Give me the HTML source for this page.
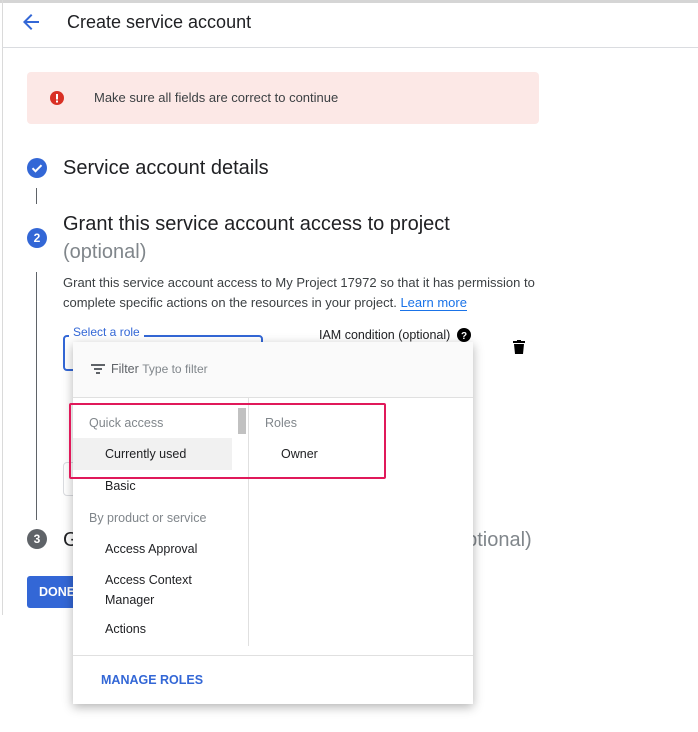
<!DOCTYPE html>
<html><head><meta charset="utf-8"><style>
*{margin:0;padding:0;box-sizing:border-box}
body{width:698px;height:732px;overflow:hidden;background:#fff;font-family:"Liberation Sans",Arial,sans-serif;color:#202124;position:relative}
.a{position:absolute;white-space:nowrap}
</style></head><body>
<div class="a" style="left:0;top:0;width:698px;height:3px;background:#d5d5d5"></div>
<div class="a" style="left:2px;top:0;width:1px;height:615px;background:#dadada"></div>
<div class="a" style="left:2px;top:47px;width:696px;height:1px;background:#dadce0"></div>
<svg class="a" style="left:19px;top:10px" width="24" height="24" viewBox="0 0 24 24"><path d="M20 11H7.83l5.59-5.59L12 4l-8 8 8 8 1.41-1.41L7.83 13H20v-2z" fill="#3367d6"/></svg>
<div class="a" style="left:67px;top:12px;font-size:18px">Create service account</div>
<div class="a" style="left:27px;top:72px;width:512px;height:52px;background:#fce8e6;border-radius:4px"></div>
<svg class="a" style="left:50px;top:91px" width="14" height="14" viewBox="0 0 14 14"><circle cx="7" cy="7" r="7" fill="#d93025"/><rect x="6" y="3" width="2" height="5.5" fill="#fff"/><rect x="6" y="9.5" width="2" height="2" fill="#fff"/></svg>
<div class="a" style="left:94px;top:90px;font-size:13px;color:#3c4043">Make sure all fields are correct to continue</div>
<svg class="a" style="left:27px;top:158px" width="20" height="20" viewBox="0 0 20 20"><circle cx="10" cy="10" r="10" fill="#3367d6"/><path d="M5.5 10.2l3 3 6-6" stroke="#fff" stroke-width="2" fill="none"/></svg>
<div class="a" style="left:63px;top:157px;font-size:20px">Service account details</div>
<div class="a" style="left:36px;top:188px;width:1px;height:16px;background:#5f6368"></div>
<div class="a" style="left:27px;top:228px;width:20px;height:20px;border-radius:50%;background:#3367d6;color:#fff;font-size:12px;font-weight:bold;text-align:center;line-height:20px">2</div>
<div class="a" style="left:63px;top:213px;font-size:20px">Grant this service account access to project</div>
<div class="a" style="left:63px;top:241px;font-size:20px;color:#80868b">(optional)</div>
<div class="a" style="left:36px;top:272px;width:1px;height:248px;background:#5f6368"></div>
<div class="a" style="left:63px;top:273px;font-size:13px;line-height:20px;color:#3c4043">Grant this service account access to My Project 17972 so that it has permission to<br>complete specific actions on the resources in your project. <span style="color:#1a73e8;border-bottom:1px solid #1a73e8">Learn more</span></div>
<div class="a" style="left:63px;top:335px;width:200px;height:36px;border:2px solid #3367d6;border-radius:4px"></div>
<div class="a" style="left:69px;top:325px;background:#fff;padding:0 4px;font-size:12px;color:#3367d6">Select a role</div>
<div class="a" style="left:319px;top:328px;font-size:12.5px">IAM condition (optional)</div>
<svg class="a" style="left:457px;top:328px" width="14" height="14" viewBox="0 0 14 14"><circle cx="7" cy="7" r="7" fill="#000"/><text x="7" y="11" font-size="10" font-weight="bold" fill="#fff" text-anchor="middle" font-family="Liberation Sans">?</text></svg>
<svg class="a" style="left:513px;top:340px" width="12" height="14" viewBox="0 0 12 14"><rect x="0" y="1" width="12" height="2" fill="#000"/><rect x="4" y="0" width="4" height="2" fill="#000"/><path d="M1 4h10l-1 10H2z" fill="#000"/></svg>
<div class="a" style="left:63px;top:462px;width:20px;height:34px;border:1px solid #dadce0;border-radius:4px"></div>
<div class="a" style="left:27px;top:529px;width:20px;height:20px;border-radius:50%;background:#5f6368;color:#fff;font-size:12px;font-weight:bold;text-align:center;line-height:20px">3</div>
<div class="a" style="left:63px;top:529px;font-size:20px">G</div>
<div class="a" style="left:455px;top:529px;font-size:20px;color:#80868b">optional)</div>
<div class="a" style="left:27px;top:576px;width:60px;height:32px;background:#3367d6;border-radius:3px;color:#fff;font-size:12.5px;font-weight:bold;padding:9px 0 0 12px">DONE</div>
<div class="a" style="left:73px;top:342px;width:400px;height:362px;background:#fff;box-shadow:0 3px 10px rgba(0,0,0,.3)">
 <div class="a" style="left:0;top:0;width:400px;height:56px;background:#fafafa;border-bottom:1px solid #e0e0e0"></div>
 <svg class="a" style="left:18px;top:21px" width="14" height="12" viewBox="0 0 14 12"><rect x="0" y="1" width="14" height="2" fill="#5f6368"/><rect x="3" y="5" width="8" height="2" fill="#5f6368"/><rect x="5" y="9" width="4" height="2" fill="#5f6368"/></svg>
 <div class="a" style="left:38px;top:20px;font-size:12.5px;color:#5f6368">Filter <span style="color:#80868b;font-size:12px">Type to filter</span></div>
 <div class="a" style="left:175px;top:56px;width:1px;height:248px;background:#e0e0e0"></div>
 <div class="a" style="left:165px;top:66px;width:8px;height:26px;background:#c1c1c1"></div>
 <div class="a" style="left:16px;top:74px;font-size:12.5px;color:#80868b">Quick access</div>
 <div class="a" style="left:0;top:96px;width:159px;height:32px;background:#f1f1f1"></div>
 <div class="a" style="left:32px;top:105px;font-size:12.5px">Currently used</div>
 <div class="a" style="left:32px;top:137px;font-size:12.5px">Basic</div>
 <div class="a" style="left:16px;top:169px;font-size:12.5px;color:#80868b">By product or service</div>
 <div class="a" style="left:32px;top:200px;font-size:12.5px">Access Approval</div>
 <div class="a" style="left:32px;top:228px;font-size:12.5px;line-height:20px">Access Context<br>Manager</div>
 <div class="a" style="left:32px;top:280px;font-size:12.5px">Actions</div>
 <div class="a" style="left:192px;top:74px;font-size:12.5px;color:#80868b">Roles</div>
 <div class="a" style="left:208px;top:105px;font-size:12.5px">Owner</div>
 <div class="a" style="left:0;top:313px;width:400px;height:1px;background:#e0e0e0"></div>
 <div class="a" style="left:28px;top:331px;font-size:12.5px;font-weight:bold;color:#3367d6">MANAGE ROLES</div>
</div>
<div class="a" style="left:69px;top:403px;width:317px;height:76px;border:2px solid #e0195a;border-radius:2px"></div>
</body></html>
